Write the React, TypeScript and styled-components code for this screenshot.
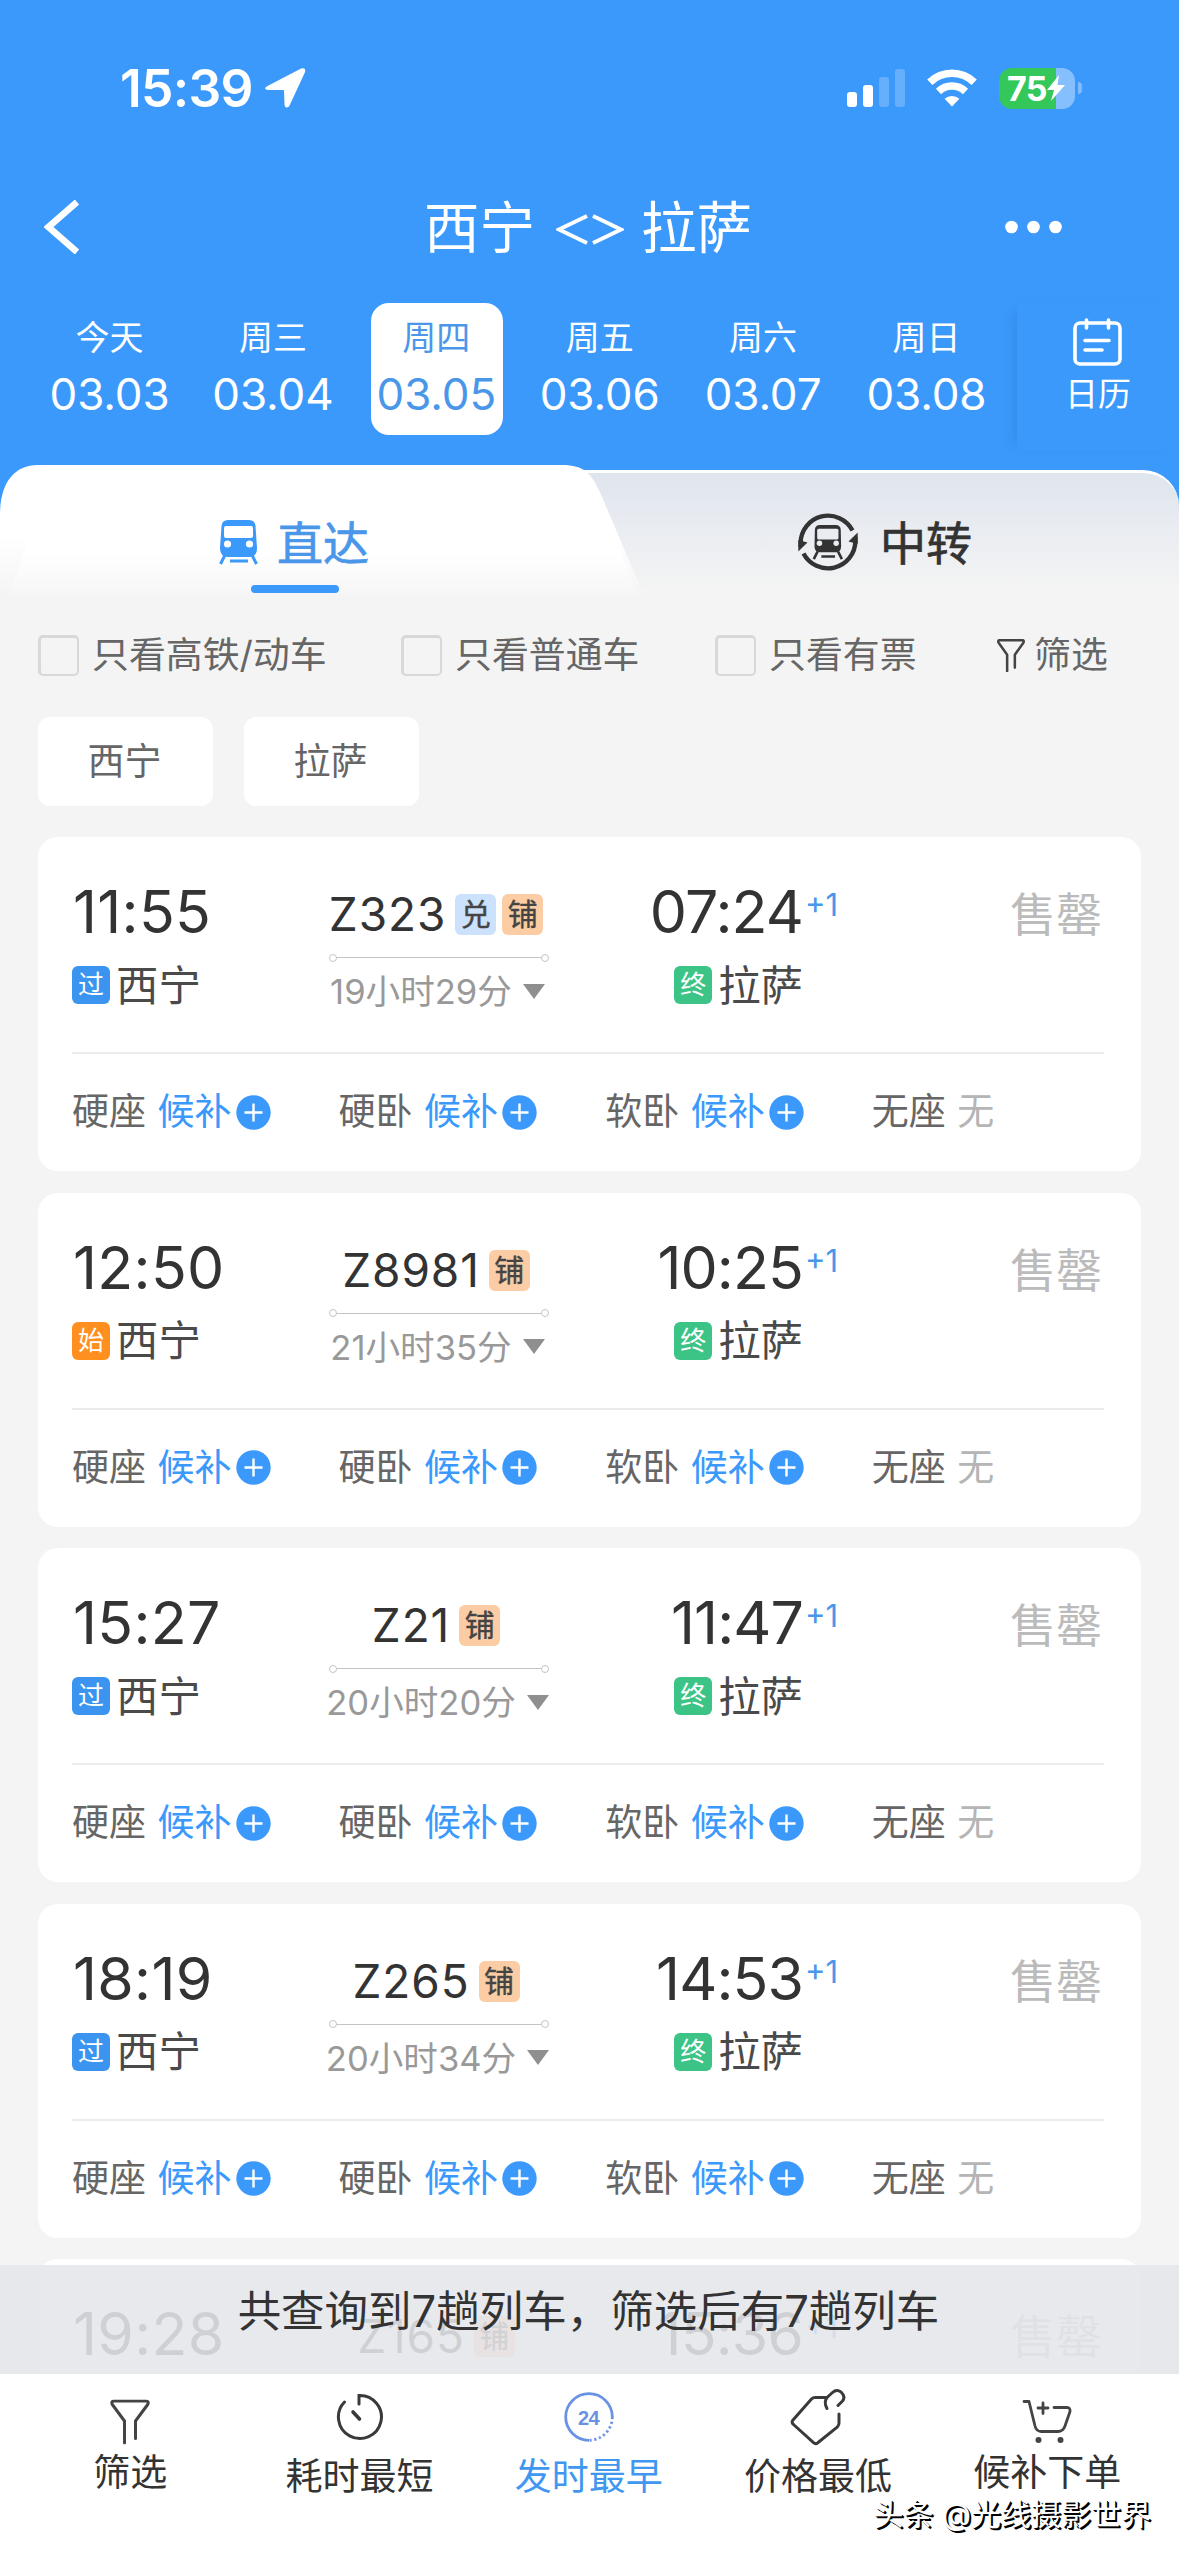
import React from "react";
import styled, { createGlobalStyle, css } from "styled-components";

const BLUE = "#3b99fc";
const LINK = "#4a97ea";
const PAGE = "#f4f4f4";

const Global = createGlobalStyle`
  * { box-sizing: border-box; }
  body {
    margin: 0;
    background: ${PAGE};
    font-family: Inter, "Noto Sans CJK SC", sans-serif;
    color: #333;
  }
`;

const Page = styled.div`
  display: flex;
  flex-direction: column;
  width: 1179px;
  height: 2556px;
  overflow: hidden;
  background: ${PAGE};
`;

/* ---------- header ---------- */

const StatusBar = styled.div`
  display: flex;
  align-items: center;
  height: 176px;
  padding: 0 97px 0 120px;
  background: ${BLUE};
  color: #fff;
`;

const Clock = styled.span`
  width: 145px;
  font-size: 51.5px;
  font-weight: 600;
  line-height: 62px;
  letter-spacing: -0.7px;
`;

const StatusIcons = styled.div`
  display: flex;
  align-items: center;
  gap: 22px;
  margin-left: auto;
`;

const Battery = styled.div`
  display: flex;
  align-items: center;
  gap: 3px;
`;

const BatteryBody = styled.div`
  display: flex;
  align-items: center;
  width: 76px;
  height: 41px;
  padding-left: 8px;
  border-radius: 13px;
  background: linear-gradient(90deg, #34c759 0 75%, #86bffd 75%);
  font-size: 34px;
  font-weight: 700;
  line-height: 41px;
  letter-spacing: -0.6px;
`;

const BatteryNub = styled.div`
  width: 4px;
  height: 12px;
  border-radius: 0 6px 6px 0;
  background: #7fbcfd;
`;

const NavBar = styled.div`
  display: grid;
  grid-template-columns: 240px 1fr 240px;
  align-items: center;
  height: 102px;
  background: ${BLUE};
  color: #fff;
`;

const NavSide = styled.div<{ $right?: boolean }>`
  display: flex;
  padding: ${(p) => (p.$right ? "0 0 0 66px" : "0 0 0 44px")};
`;

const Title = styled.h1`
  display: flex;
  align-items: center;
  justify-content: center;
  gap: 17px;
  margin: 0;
  padding: 2px 3px 0 0;
  font-size: 55.5px;
  font-weight: 400;
  line-height: 64px;
  svg {
    margin: 3px 0 0 4px;
  }
`;

const DateBar = styled.div`
  display: flex;
  height: 187px;
  padding: 25px 0 0 44px;
  background: ${BLUE};
  color: #fff;
`;

const DateCells = styled.div`
  display: grid;
  grid-template-columns: repeat(6, 132px);
  column-gap: 31.4px;
`;

const DateCell = styled.div<{ $active?: boolean }>`
  display: flex;
  flex-direction: column;
  align-items: center;
  height: 132px;
  padding: 13px 1px 0 0;
  border-radius: 18px;
  white-space: nowrap;
  ${(p) =>
    p.$active &&
    css`
      background: #fff;
      color: ${LINK};
    `}
`;

const DayName = styled.span`
  font-size: 34px;
  line-height: 44px;
`;

const DayDate = styled.span`
  margin-top: 9px;
  font-size: 44px;
  font-weight: 430;
  line-height: 50px;
  letter-spacing: -0.1px;
`;

const CalendarButton = styled.div`
  display: flex;
  flex: 1;
  flex-direction: column;
  align-items: center;
  height: 148px;
  margin-left: 24px;
  padding-top: 15px;
  box-shadow: -9px 1px 12px -8px rgba(30, 90, 170, 0.3);
`;

const CalendarLabel = styled.span`
  margin-top: 8px;
  font-size: 33px;
  line-height: 40px;
`;

/* ---------- tabs ---------- */

const TabBar = styled.div`
  position: relative;
  display: flex;
  height: 140px;
  background: linear-gradient(${BLUE} 0 60px, ${PAGE} 60px);
`;

const InactiveShape = styled.div`
  position: absolute;
  inset: 5px 0 0 500px;
  border-top: 3px solid #fff;
  border-radius: 0 36px 0 0;
  background: linear-gradient(#dfe5ee 0, #e9ecf1 55px, ${PAGE} 118px);
`;

const ActiveShape = styled.div`
  position: absolute;
  inset: 0 auto 0 0;
  width: 660px;
  background: linear-gradient(#fff 0 72px, ${PAGE} 132px);
  clip-path: path("M0 50 C0 18 14 0 38 0 L562 0 C584 0 592 8 602 32 L648 140 L0 140 Z");
`;

const ActiveGlow = styled.div`
  position: absolute;
  inset: 0 auto 0 0;
  width: 640px;
  background: linear-gradient(#fff 0 88px, #f8f8f9 122px, ${PAGE} 134px);
  clip-path: path("M38 50 L602 32 L640 138 L6 138 Z");
`;

const Tab = styled.div<{ $width: number; $left: number; $active?: boolean }>`
  position: relative;
  display: flex;
  width: ${(p) => p.$width}px;
  align-items: flex-start;
  padding-left: ${(p) => p.$left}px;
  font-size: 46px;
  font-weight: 400;
  line-height: 60px;
  color: ${(p) => (p.$active ? LINK : "#333")};
  -webkit-text-stroke: 0.7px currentColor;
`;

const TabLabel = styled.span<{ $gap: number }>`
  margin: 48px 0 0 ${(p) => p.$gap}px;
`;

const TabIcon = styled.div<{ $top: number }>`
  display: flex;
  margin-top: ${(p) => p.$top}px;
`;

const Underline = styled.div`
  position: absolute;
  top: 120px;
  left: 251px;
  width: 88px;
  height: 8px;
  border-radius: 4px;
  background: ${BLUE};
`;

/* ---------- filters ---------- */

const FilterRow = styled.div`
  display: grid;
  grid-template-columns: 363px 314px 282px 1fr;
  align-items: center;
  height: 100px;
  padding-left: 38px;
  font-size: 36.9px;
  line-height: 44px;
  color: #666;
`;

const FilterItem = styled.label`
  display: flex;
  align-items: center;
  gap: 13px;
`;

const Checkbox = styled.span`
  width: 41px;
  height: 41px;
  margin-top: 1px;
  border: 2px solid #d8d8d8;
  border-top-width: 3px;
  border-left-width: 3px;
  border-radius: 5px;
`;

const FilterLink = styled.div`
  display: flex;
  align-items: center;
  gap: 9px;
`;

const Chips = styled.div`
  display: flex;
  gap: 31px;
  margin-top: 12px;
  padding-left: 38px;
`;

const Chip = styled.div`
  width: 175px;
  height: 89px;
  padding-right: 2px;
  border-radius: 12px;
  background: #fff;
  font-size: 37px;
  line-height: 90px;
  text-align: center;
  color: #666;
`;

/* ---------- train list ---------- */

const List = styled.div`
  position: relative;
  display: flex;
  flex: 1;
  flex-direction: column;
  gap: 21.5px;
  min-height: 0;
  margin-top: 31px;
  padding: 0 38px;
  overflow: hidden;
`;

const Card = styled.article`
  flex: none;
  height: 334px;
  padding: 0 37px 0 34px;
  border-radius: 20px;
  background: #fff;
`;

const Journey = styled.div`
  display: grid;
  grid-template-columns: 257px 220px 292px 1fr;
  height: 217px;
  border-bottom: 2px solid #ebebeb;
`;

const Stop = styled.div<{ $end?: boolean }>`
  display: flex;
  flex-direction: column;
  align-items: ${(p) => (p.$end ? "flex-end" : "flex-start")};
  padding-top: 45px;
`;

const TimeRow = styled.div`
  display: flex;
  height: 60px;
`;

const Time = styled.span<{ $end?: boolean }>`
  margin-left: ${(p) => (p.$end ? 0 : 1)}px;
  font-size: 59px;
  font-weight: 430;
  line-height: 60px;
  letter-spacing: ${(p) => (p.$end ? -0.9 : 0.3)}px;
`;

const NextDay = styled.span`
  width: 36px;
  margin-left: 2px;
  font-size: 31px;
  line-height: 45px;
  color: ${LINK};
`;

const Station = styled.div<{ $end?: boolean }>`
  display: flex;
  align-items: center;
  gap: 6px;
  height: 40px;
  margin: 23px ${(p) => (p.$end ? 38 : 0)}px 0 0;
  font-size: 42.4px;
  line-height: 43px;
  color: #4a4a4a;
`;

const Mark = styled.span<{ $color: string }>`
  width: 38px;
  height: 38px;
  border-radius: 6px;
  background: ${(p) => p.$color};
  font-size: 26px;
  line-height: 38px;
  text-align: center;
  color: #fff;
`;

const Middle = styled.div`
  display: flex;
  flex-direction: column;
  align-items: center;
  padding-top: 56px;
`;

const NumberRow = styled.div`
  display: flex;
  align-items: center;
  gap: 6px;
  height: 43px;
  margin-right: 6px;
`;

const Number = styled.span`
  margin-right: 3px;
  font-size: 46px;
  line-height: 43px;
  letter-spacing: 0.9px;
`;

const Tag = styled.span<{ $color: string }>`
  width: 41px;
  height: 41px;
  border-radius: 6px;
  background: ${(p) => p.$color};
  font-size: 30px;
  line-height: 41px;
  text-align: center;
  color: #444;
  -webkit-text-stroke: 0.4px currentColor;
`;

const Route = styled.div`
  display: flex;
  align-items: center;
  width: 220px;
  height: 7px;
  margin-top: 18px;
  &::before,
  &::after {
    content: "";
    width: 6px;
    height: 6px;
    border: 1px solid #c4c4c4;
    border-radius: 50%;
  }
`;

const RouteLine = styled.span`
  flex: 1;
  height: 1px;
  background: #c4c4c4;
`;

const Duration = styled.div`
  display: flex;
  align-items: center;
  gap: 11px;
  margin: 10px 3px 0 0;
  font-size: 34.6px;
  line-height: 40px;
  white-space: nowrap;
  color: #999;
`;

const Caret = styled.span`
  border: 11px solid transparent;
  border-top: 15px solid #8f8f8f;
  border-bottom: 0;
`;

const SoldOut = styled.span`
  padding: 52px 2px 0 0;
  font-size: 46px;
  line-height: 50px;
  text-align: right;
  color: #bbb;
`;

const Seats = styled.div`
  display: grid;
  grid-template-columns: repeat(4, 266.6px);
  align-items: center;
  height: 116px;
  font-size: 37px;
  line-height: 44px;
`;

const Seat = styled.div`
  display: flex;
  align-items: center;
  color: #666;
`;

const SeatState = styled.span<{ $none?: boolean }>`
  margin: 0 4px 0 11.5px;
  color: ${(p) => (p.$none ? "#b5b5b5" : BLUE)};
`;

const Toast = styled.div`
  position: absolute;
  inset: auto 0 0 0;
  height: 109px;
  padding-right: 2px;
  background: rgba(229, 230, 234, 0.88);
  font-size: 43.5px;
  line-height: 93px;
  text-align: center;
  color: #333;
`;

/* ---------- bottom bar ---------- */

const BottomBar = styled.nav`
  position: relative;
  display: grid;
  grid-template-columns: repeat(5, 229.3px);
  height: 182px;
  padding: 0 15.5px;
  background: #fff;
`;

const BottomItem = styled.div<{ $active?: boolean; $raised?: boolean }>`
  display: flex;
  flex-direction: column;
  align-items: center;
  padding-top: 14px;
  font-size: 37px;
  line-height: 44px;
  color: ${(p) => (p.$active ? "#3f97f0" : "#333")};
  span {
    margin-top: ${(p) => (p.$raised ? 5 : 9)}px;
  }
`;

const Watermark = styled.div`
  position: absolute;
  right: 28px;
  bottom: 22px;
  font-size: 30px;
  line-height: 40px;
  white-space: nowrap;
  color: #fff;
  text-shadow: 2px 2px 0 #000, 1px 1px 0 #000;
`;

/* ---------- icons ---------- */

const TrainGlyph = ({ fill, hole }: { fill: string; hole: string }) => (
  <>
    <path d="M9 0H30Q36 0 36.5 6L38 28Q38 37 30 37H9Q1 37 1 28L2.5 6Q3 0 9 0Z" fill={fill} />
    <rect x="5" y="6" width="29" height="12" rx="2" fill={hole} />
    <circle cx="8.5" cy="24" r="3.6" fill={hole} />
    <circle cx="30.5" cy="24" r="3.6" fill={hole} />
    <path d="M6 35L1.5 44M33 35L37.5 44M11 41H29" stroke={fill} strokeWidth="3" fill="none" />
  </>
);

const Funnel = ({ width, height, stroke }: { width: number; height: number; stroke: number }) => (
  <svg width={width} height={height} viewBox="0 0 40 45" preserveAspectRatio="none">
    <path
      d="M14.5 43.5V21.5L2.3 5Q.8 1.8 4 1.5H36Q39.2 1.8 37.7 5L25.5 21.5V39"
      fill="none"
      stroke="#444"
      strokeWidth={stroke}
      strokeLinecap="round"
      strokeLinejoin="round"
    />
  </svg>
);

const PlusCircle = () => (
  <svg width="35" height="35" viewBox="0 0 35 35">
    <circle cx="17.5" cy="17.5" r="17.2" fill={BLUE} />
    <path d="M8.5 17.5H26.5M17.5 8.5V26.5" stroke="#fff" strokeWidth="2.4" />
  </svg>
);

const TransferIcon = () => (
  <svg width="60" height="60" viewBox="0 0 60 60" fill="none">
    <path d="M54.5 18.5A27.5 27.5 0 0 0 2.6 31V35" stroke="#333" strokeWidth="4.4" />
    <path d="M0.3 39.5V28L9.5 30.5Z" fill="#333" />
    <path d="M5.5 41.5A27.5 27.5 0 0 0 57.4 29V25" stroke="#333" strokeWidth="4.4" />
    <path d="M59.7 20.5V32L50.5 29.5Z" fill="#333" />
    <g transform="translate(15 13) scale(.76)">
      <path d="M9 0H30Q36 0 36.5 6L37 28Q37 36 30 36H9Q2 36 2 28L2.5 6Q3 0 9 0Z" fill="#333" />
      <rect x="5.5" y="5" width="28" height="14" rx="2" fill="#e9ecf1" />
      <circle cx="8.5" cy="24" r="3.6" fill="#e9ecf1" />
      <circle cx="30.5" cy="24" r="3.6" fill="#e9ecf1" />
      <path d="M6 35L1 45M33 35L38 45M11 41.5H29" stroke="#333" strokeWidth="3.4" />
    </g>
  </svg>
);

const SignalIcon = () => (
  <svg width="58" height="38" viewBox="0 0 58 38" fill="#fff">
    <rect x="0" y="23" width="10" height="15" rx="3" />
    <rect x="16" y="16" width="10" height="22" rx="3" />
    <rect x="32" y="8" width="10" height="30" rx="3" opacity=".22" />
    <rect x="48" y="0" width="10" height="38" rx="3" opacity=".22" />
  </svg>
);

const WifiIcon = () => (
  <svg width="50" height="38" viewBox="0 0 50 38" fill="none" stroke="#fff" strokeWidth="7.5">
    <path d="M2.8 13.2A32 32 0 0 1 47.2 13.2" />
    <path d="M11.5 22.5A19.5 19.5 0 0 1 38.5 22.5" />
    <path d="M25 37.5L17.6 29.8A11 11 0 0 1 32.4 29.8Z" fill="#fff" stroke="none" />
  </svg>
);

const LocationIcon = () => (
  <svg width="41" height="40" viewBox="0 0 41 40">
    <path
      d="M2 19.5L36.5 1.5Q40 .2 39 4L23.5 37.5Q21 40 20.5 36.5L20 22.5Q20 21 18.5 21L3 21Q-.2 20.8 2 19.5Z"
      fill="#fff"
      stroke="#fff"
      strokeWidth="2"
    />
  </svg>
);

const BoltIcon = () => (
  <svg width="18" height="26" viewBox="0 0 18 26">
    <path d="M12 0L0 15H7L4 26L18 10H10.5Z" fill="#fff" />
  </svg>
);

const ChevronIcon = () => (
  <svg width="38" height="54" viewBox="0 0 38 54">
    <path d="M33 2L4.5 27L33 52" fill="none" stroke="#fff" strokeWidth="6.5" />
  </svg>
);

const DotsIcon = () => (
  <svg width="58" height="14" viewBox="0 0 58 14" fill="#fff">
    <circle cx="6.5" cy="7" r="6.3" />
    <circle cx="28.5" cy="7" r="6.3" />
    <circle cx="50.5" cy="7" r="6.3" />
  </svg>
);

const AnglesIcon = () => (
  <svg width="68" height="34" viewBox="0 0 68 34" fill="none" stroke="#fff" strokeWidth="3.8">
    <path d="M31 3L3 16.5L31 30M37 3L65 16.5L37 30" />
  </svg>
);

const CalendarIcon = () => (
  <svg width="49" height="48" viewBox="0 0 49 48" fill="none" stroke="#fff" strokeWidth="3.6" strokeLinecap="round">
    <rect x="2" y="5" width="45" height="41" rx="5" />
    <path d="M13.5 2V10M35.5 2V10M12 22.5H36M12 32H29" />
  </svg>
);

const TimerIcon = () => (
  <svg width="48" height="58" viewBox="0 0 48 58" fill="none" stroke="#3a3a3a" strokeWidth="3" strokeLinecap="round">
    <path d="M24 16V7.5A21.5 21.5 0 1 1 9.5 14" />
    <path d="M18 24L24.5 31" strokeWidth="3.6" />
  </svg>
);

const DayClockIcon = () => (
  <svg width="50" height="58" viewBox="0 0 50 58" fill="none" stroke="#6a92e4" strokeWidth="2.8">
    <path d="M25 52.3A23.3 23.3 0 1 1 48.3 29" />
    <path d="M48.3 29A23.3 23.3 0 0 1 25 52.3" strokeDasharray="2.2 2.6" />
    <text
      x="24.5"
      y="36.5"
      textAnchor="middle"
      fontFamily="Liberation Sans, sans-serif"
      fontSize="20"
      fontWeight="700"
      letterSpacing="-.6"
      fill="#6a92e4"
      stroke="none"
    >
      24
    </text>
  </svg>
);

const PriceIcon = () => (
  <svg width="56" height="58" viewBox="0 0 56 58" fill="none" stroke="#3a3a3a" strokeWidth="3" strokeLinecap="round" strokeLinejoin="round">
    <path d="M49 26V35Q49 37 47.5 38.8L27.5 55Q25.5 56.4 23.5 54.6L3.5 36.5Q1 34.5 3 32L21.5 11Q23 9.5 25 9.5H37L42.5 4.5Q46.5 .8 51 4Q56 8.5 52.5 13L48 17.5" />
    <path d="M37 9.5Q33.5 14 37 20.5" />
  </svg>
);

const CartIcon = () => (
  <svg width="50" height="58" viewBox="0 0 50 58" fill="none" stroke="#444" strokeWidth="2.8" strokeLinecap="round" strokeLinejoin="round">
    <path d="M2 13.5H7L13 38Q14.5 43.5 19 43.5H36Q41 43.5 43 38L48 23.5Q48.5 19.5 45 19.5H32" />
    <path d="M16 20H26M21 15V25.5" />
    <circle cx="16.5" cy="52" r="3" fill="#444" stroke="none" />
    <circle cx="38.5" cy="52" r="3" fill="#444" stroke="none" />
  </svg>
);

/* ---------- data ---------- */

const days = [
  ["今天", "03.03"],
  ["周三", "03.04"],
  ["周四", "03.05"],
  ["周五", "03.06"],
  ["周六", "03.07"],
  ["周日", "03.08"],
];

const markColors: Record<string, string> = { 过: "#3b95f0", 始: "#ff9020", 终: "#3bc486" };
const tagColors: Record<string, string> = { 兑: "#cce1fc", 铺: "#fccda4" };

type Train = { no: string; tags: string[]; dep: string; arr: string; mark: string; duration: string };

const trains: Train[] = [
  { no: "Z323", tags: ["兑", "铺"], dep: "11:55", arr: "07:24", mark: "过", duration: "19小时29分" },
  { no: "Z8981", tags: ["铺"], dep: "12:50", arr: "10:25", mark: "始", duration: "21小时35分" },
  { no: "Z21", tags: ["铺"], dep: "15:27", arr: "11:47", mark: "过", duration: "20小时20分" },
  { no: "Z265", tags: ["铺"], dep: "18:19", arr: "14:53", mark: "过", duration: "20小时34分" },
  { no: "Z165", tags: ["铺"], dep: "19:28", arr: "15:36", mark: "过", duration: "" },
];

const TrainCard = ({ train, preview }: { train: Train; preview?: boolean }) => (
  <Card>
    <Journey>
      <Stop>
        <TimeRow>
          <Time>{train.dep}</Time>
        </TimeRow>
        {!preview && (
          <Station>
            <Mark $color={markColors[train.mark]}>{train.mark}</Mark>西宁
          </Station>
        )}
      </Stop>
      <Middle>
        <NumberRow>
          <Number>{train.no}</Number>
          {train.tags.map((t) => (
            <Tag key={t} $color={tagColors[t]}>
              {t}
            </Tag>
          ))}
        </NumberRow>
        {!preview && (
          <>
            <Route>
              <RouteLine />
            </Route>
            <Duration>
              {train.duration}
              <Caret />
            </Duration>
          </>
        )}
      </Middle>
      <Stop $end>
        <TimeRow>
          <Time $end>{train.arr}</Time>
          <NextDay>+1</NextDay>
        </TimeRow>
        {!preview && (
          <Station $end>
            <Mark $color={markColors["终"]}>终</Mark>拉萨
          </Station>
        )}
      </Stop>
      <SoldOut>售罄</SoldOut>
    </Journey>
    {!preview && (
      <Seats>
        {["硬座", "硬卧", "软卧"].map((s) => (
          <Seat key={s}>
            {s}
            <SeatState>候补</SeatState>
            <PlusCircle />
          </Seat>
        ))}
        <Seat>
          无座<SeatState $none>无</SeatState>
        </Seat>
      </Seats>
    )}
  </Card>
);

export default function App() {
  return (
    <Page>
      <Global />
      <StatusBar>
        <Clock>15:39</Clock>
        <LocationIcon />
        <StatusIcons>
          <SignalIcon />
          <WifiIcon />
          <Battery>
            <BatteryBody>
              75
              <BoltIcon />
            </BatteryBody>
            <BatteryNub />
          </Battery>
        </StatusIcons>
      </StatusBar>
      <NavBar>
        <NavSide>
          <ChevronIcon />
        </NavSide>
        <Title>
          <span>西宁</span>
          <AnglesIcon />
          <span>拉萨</span>
        </Title>
        <NavSide $right>
          <DotsIcon />
        </NavSide>
      </NavBar>
      <DateBar>
        <DateCells>
          {days.map(([name, date]) => (
            <DateCell key={date} $active={date === "03.05"}>
              <DayName>{name}</DayName>
              <DayDate>{date}</DayDate>
            </DateCell>
          ))}
        </DateCells>
        <CalendarButton>
          <CalendarIcon />
          <CalendarLabel>日历</CalendarLabel>
        </CalendarButton>
      </DateBar>

      <TabBar>
        <InactiveShape />
        <ActiveShape />
        <ActiveGlow />
        <Tab $width={590} $left={219} $active>
          <TabIcon $top={55}>
            <svg width="39" height="45" viewBox="0 0 39 45">
              <TrainGlyph fill={BLUE} hole="#fff" />
            </svg>
          </TabIcon>
          <TabLabel $gap={19}>直达</TabLabel>
          <Underline />
        </Tab>
        <Tab $width={589} $left={208}>
          <TabIcon $top={47}>
            <TransferIcon />
          </TabIcon>
          <TabLabel $gap={22}>中转</TabLabel>
        </Tab>
      </TabBar>

      <FilterRow>
        {["只看高铁/动车", "只看普通车", "只看有票"].map((f) => (
          <FilterItem key={f}>
            <Checkbox />
            {f}
          </FilterItem>
        ))}
        <FilterLink>
          <Funnel width={28} height={33} stroke={3.6} />
          筛选
        </FilterLink>
      </FilterRow>
      <Chips>
        <Chip>西宁</Chip>
        <Chip>拉萨</Chip>
      </Chips>

      <List>
        {trains.map((t, i) => (
          <TrainCard key={t.no} train={t} preview={i === trains.length - 1} />
        ))}
        <Toast>共查询到7趟列车，筛选后有7趟列车</Toast>
      </List>

      <BottomBar>
        <BottomItem $raised>
          <svg width="40" height="58" viewBox="0 0 40 58">
            <g transform="translate(0 11.5)">
              <Funnel width={40} height={45} stroke={3} />
            </g>
          </svg>
          <span>筛选</span>
        </BottomItem>
        <BottomItem>
          <TimerIcon />
          <span>耗时最短</span>
        </BottomItem>
        <BottomItem $active>
          <DayClockIcon />
          <span>发时最早</span>
        </BottomItem>
        <BottomItem>
          <PriceIcon />
          <span>价格最低</span>
        </BottomItem>
        <BottomItem $raised>
          <CartIcon />
          <span>候补下单</span>
        </BottomItem>
        <Watermark>头条 @光线摄影世界</Watermark>
      </BottomBar>
    </Page>
  );
}
